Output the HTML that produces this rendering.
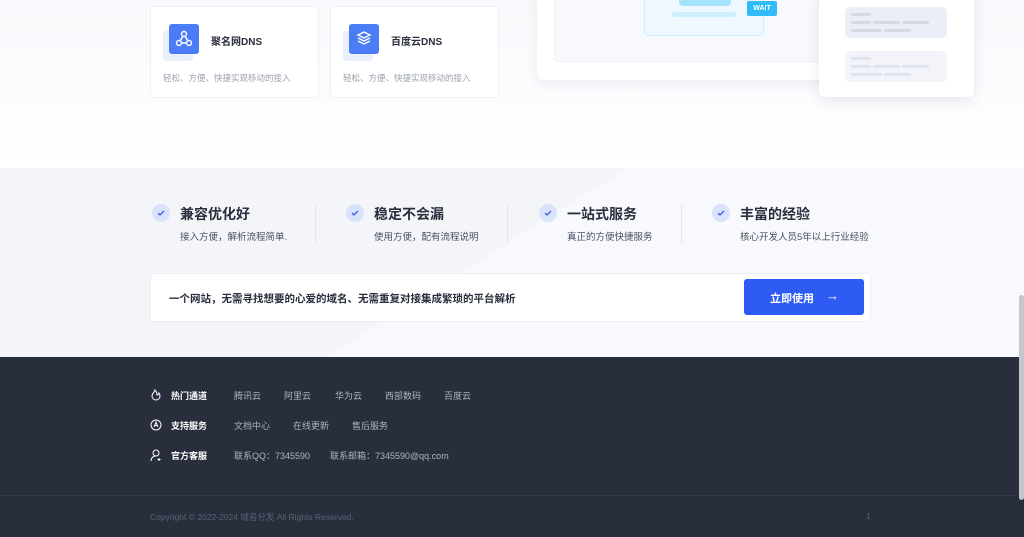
<!DOCTYPE html>
<html><head><meta charset="utf-8"><style>
*{margin:0;padding:0;box-sizing:border-box}
body{width:1024px;height:537px;overflow:hidden;font-family:"Liberation Sans","Noto Sans CJK SC",sans-serif;background:#fff;position:relative}
.top{position:absolute;left:0;top:0;width:1024px;height:168px;background:linear-gradient(#f7f9fc,#fff)}
.card{position:absolute;top:6px;width:169px;height:92px;background:#fff;border:1px solid #eef0f5;border-radius:4px}
.card .sh{position:absolute;left:12px;top:24px;width:30px;height:30px;background:#eaf0fc;border-radius:3px}
.card .ic{position:absolute;left:18px;top:17px;width:30px;height:30px;background:#4a7cf6;border-radius:3px}
.card .t{position:absolute;left:60px;top:26px;font-size:10px;font-weight:bold;color:#2a2f3d}
.card .d{position:absolute;left:12px;top:65px;font-size:8.5px;color:#9aa0ad}
.mid{position:absolute;left:0;top:168px;width:1024px;height:189px;background:#f3f5f9;overflow:hidden}
.streak{position:absolute;left:660px;top:-20px;width:900px;height:260px;background:rgba(255,255,255,.45);transform:skewX(-58deg);transform-origin:0 0}
.feat{position:absolute;top:36px}
.chk{position:absolute;left:0;top:0;width:18px;height:18px;border-radius:50%;background:#d9e3fb}
.feat .h{position:absolute;left:28px;top:0;font-size:14px;font-weight:bold;color:#2a2f3d;white-space:nowrap}
.feat .s{position:absolute;left:28px;top:25px;font-size:9.5px;color:#4a5060;white-space:nowrap}
.vl{position:absolute;top:36px;width:1px;height:40px;background:#e4e7ee}
.bar{position:absolute;left:150px;top:105px;width:721px;height:49px;background:#fff;border:1px solid #eceff4;border-radius:3px}
.bar .tx{position:absolute;left:18px;top:17px;font-size:10.5px;font-weight:bold;color:#2a2f3d}
.btn{position:absolute;left:593px;top:5px;width:120px;height:36px;background:#2f5bf5;border-radius:3px;color:#fff;font-size:11px;font-weight:bold;padding:11px 0 0 26px}
.foot{position:absolute;left:0;top:357px;width:1024px;height:180px;background:#292e3d}
.row{position:absolute;left:150px;font-size:9px;color:#aeb3bf}
.row b{position:absolute;left:21px;top:0;color:#fff;white-space:nowrap}
.row span{position:absolute;top:0;white-space:nowrap}
.row svg{position:absolute;left:0;top:0}
.ln{position:absolute;height:3px;background:#d5d9e4;border-radius:2px}
</style></head><body>
<div class="top"></div>
<div class="card" style="left:150px"><div class="sh"></div><div class="ic"><svg width="30" height="30" viewBox="0 0 30 30" fill="none" stroke="#fff" stroke-width="1.4"><circle cx="15" cy="10" r="2.5"/><circle cx="10" cy="19" r="2.5"/><circle cx="20" cy="19" r="2.5"/><path d="M14 12l-3 5M16 12l3 5M12.5 19h5"/></svg></div><div class="t">聚名网DNS</div><div class="d">轻松、方便、快捷实现移动的接入</div></div>
<div class="card" style="left:330px"><div class="sh"></div><div class="ic"><svg width="30" height="30" viewBox="0 0 30 30" fill="none" stroke="#fff" stroke-width="1.4"><path d="M15 8l6 3-6 3-6-3z"/><path d="M9 14l6 3 6-3M9 17l6 3 6-3"/></svg></div><div class="t">百度云DNS</div><div class="d">轻松、方便、快捷实现移动的接入</div></div>
<div style="position:absolute;left:537px;top:-10px;width:296px;height:90px;background:#fff;border-radius:6px;box-shadow:0 4px 12px rgba(40,50,90,.08)"></div>
<div style="position:absolute;left:554px;top:-10px;width:270px;height:72px;background:#f8f9fd;border:1px solid #eceff6;border-radius:4px"></div>
<div style="position:absolute;left:644px;top:-10px;width:120px;height:46px;background:#eef8fe;border:1px solid #cdeefd;border-radius:4px"></div>
<div style="position:absolute;left:679px;top:-5px;width:52px;height:11px;background:#a5e3fc;border-radius:4px"></div>
<div style="position:absolute;left:672px;top:12px;width:64px;height:5px;background:#cdeefd;border-radius:3px"></div>
<div style="position:absolute;left:747px;top:1px;width:30px;height:15px;background:#2fbcf8;border-radius:2px;color:#fff;font-size:7px;font-weight:bold;text-align:center;line-height:15px">WAIT</div>
<div style="position:absolute;left:819px;top:-10px;width:155px;height:107px;background:#fff;border-radius:5px;box-shadow:0 4px 14px rgba(40,50,90,.1)"></div>
<div style="position:absolute;left:845px;top:7px;width:102px;height:31px;background:#ebeef6;border-radius:5px"></div>
<div style="position:absolute;left:845px;top:51px;width:102px;height:31px;background:#f2f4f9;border-radius:5px"></div>
<div class="ln" style="left:851px;top:13px;width:20px"></div>
<div class="ln" style="left:851px;top:21px;width:20px"></div><div class="ln" style="left:873px;top:21px;width:27px"></div><div class="ln" style="left:902px;top:21px;width:27px"></div>
<div class="ln" style="left:851px;top:29px;width:31px"></div><div class="ln" style="left:884px;top:29px;width:27px"></div>
<div class="ln" style="left:851px;top:57px;width:20px;opacity:.6"></div>
<div class="ln" style="left:851px;top:65px;width:20px;opacity:.6"></div><div class="ln" style="left:873px;top:65px;width:27px;opacity:.6"></div><div class="ln" style="left:902px;top:65px;width:27px;opacity:.6"></div>
<div class="ln" style="left:851px;top:73px;width:31px;opacity:.6"></div><div class="ln" style="left:884px;top:73px;width:27px;opacity:.6"></div>
<div class="mid"><div class="streak"></div>
<div class="feat" style="left:152px"><div class="chk"><svg width="18" height="18"><path d="M6 9l2 2 4-4" stroke="#3c5fe0" stroke-width="1.3" fill="none"/></svg></div><div class="h">兼容优化好</div><div class="s">接入方便，解析流程简单.</div></div>
<div class="vl" style="left:315px"></div>
<div class="feat" style="left:346px"><div class="chk"><svg width="18" height="18"><path d="M6 9l2 2 4-4" stroke="#3c5fe0" stroke-width="1.3" fill="none"/></svg></div><div class="h">稳定不会漏</div><div class="s">使用方便，配有流程说明</div></div>
<div class="vl" style="left:507px"></div>
<div class="feat" style="left:539px"><div class="chk"><svg width="18" height="18"><path d="M6 9l2 2 4-4" stroke="#3c5fe0" stroke-width="1.3" fill="none"/></svg></div><div class="h">一站式服务</div><div class="s">真正的方便快捷服务</div></div>
<div class="vl" style="left:681px"></div>
<div class="feat" style="left:712px"><div class="chk"><svg width="18" height="18"><path d="M6 9l2 2 4-4" stroke="#3c5fe0" stroke-width="1.3" fill="none"/></svg></div><div class="h">丰富的经验</div><div class="s">核心开发人员5年以上行业经验</div></div>
<div class="bar"><div class="tx">一个网站，无需寻找想要的心爱的域名、无需重复对接集成繁琐的平台解析</div><div class="btn">立即使用<span style="position:absolute;left:82px;top:9px;font-weight:normal;font-size:13px">→</span></div></div>
</div>
<div class="foot">
<div class="row" style="top:32px"><svg width="12" height="12" viewBox="0 0 12 12" fill="none" stroke="#fff" stroke-width="1"><path d="M5 1c0 2-3 3-3 6a4 4 0 008 0c0-2-1-3-1-3 0 1-1 2-2 2 0-2-1-4-2-5z"/></svg><b>热门通道</b><span style="left:84px">腾讯云</span><span style="left:134px">阿里云</span><span style="left:185px">华为云</span><span style="left:235px">西部数码</span><span style="left:294px">百度云</span></div>
<div class="row" style="top:62px"><svg width="12" height="12" viewBox="0 0 12 12" fill="none" stroke="#fff" stroke-width="1"><circle cx="6" cy="6" r="5"/><path d="M4 8l2-5 2 5M4.5 6.5h3"/></svg><b>支持服务</b><span style="left:84px">文档中心</span><span style="left:143px">在线更新</span><span style="left:202px">售后服务</span></div>
<div class="row" style="top:92px"><svg width="12" height="12" viewBox="0 0 12 12" fill="none" stroke="#fff" stroke-width="1"><circle cx="6" cy="4" r="3"/><path d="M1 12c0-3 2-5 5-5M9 9v3M7.5 10.5h3"/></svg><b>官方客服</b><span style="left:84px">联系QQ：7345590</span><span style="left:180px">联系邮箱：7345590@qq.com</span></div>
<div style="position:absolute;left:0;top:138px;width:1024px;height:1px;background:#333848"></div>
<div style="position:absolute;left:150px;top:154px;font-size:8.5px;color:#5d6272">Copyright © 2022-2024 域名分发 All Rights Reserved.</div>
<div style="position:absolute;left:866px;top:154px;font-size:8.5px;color:#5d6272">1</div>
</div>
<div style="position:absolute;left:1019px;top:295px;width:5px;height:205px;background:#c4c6cb;border-radius:3px"></div>
</body></html>
